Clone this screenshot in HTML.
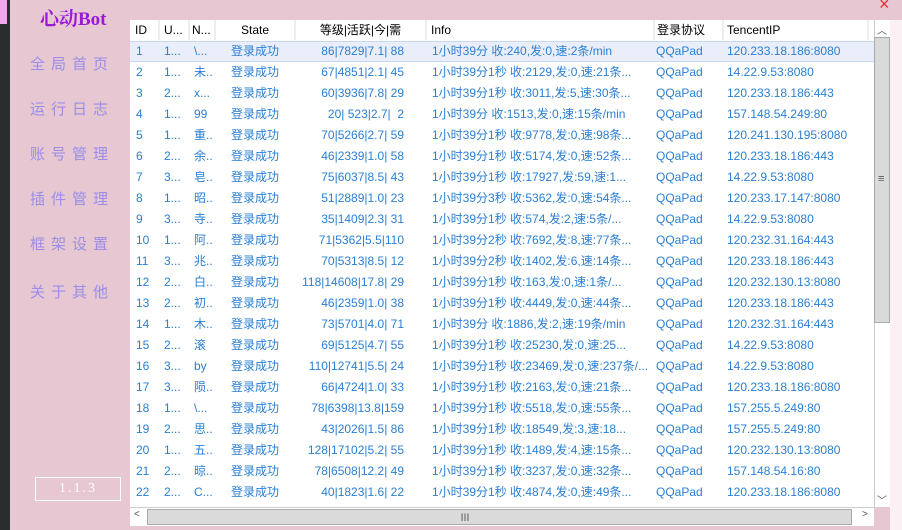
<!DOCTYPE html><html><head><meta charset="utf-8"><style>
body{margin:0;width:902px;height:530px;background:#e6c7d2;position:relative;overflow:hidden;font-family:"Liberation Sans","Noto Sans CJK SC",sans-serif}
.strip{position:absolute;left:0;top:0;width:10px;height:530px;background:#2a2c30}
.strip i{position:absolute;left:0;top:0;width:7px;height:24px;background:#f0a8f0}
.title{position:absolute;left:40px;top:4px;font:bold 19px "Liberation Serif","Noto Serif CJK SC",serif;color:#9a1ad8}
.nav{position:absolute;left:30px;font-size:15px;color:#9a8ee8;letter-spacing:6px;font-family:"Noto Sans CJK SC",sans-serif}
.ver{position:absolute;left:35px;top:477px;width:84px;height:22px;border:1px solid #fff;color:#fff;font:14px "Liberation Serif",serif;text-align:center;line-height:22px;letter-spacing:2px}
.x{position:absolute;left:879px;top:-6px;color:#e03030;font-size:18px}
.rt{position:absolute;left:890px;top:20px;width:12px;height:510px;background:#fbf0f4}
.tbl{position:absolute;left:130px;top:20px;width:744px;height:487px;background:#fff;overflow:hidden}
.row{position:absolute;left:0;height:21px;width:744px;font-size:12px;line-height:21px;color:#2a7fd4;font-family:"Liberation Sans","Noto Sans CJK SC",sans-serif}
.row span{position:absolute;top:0;white-space:nowrap;overflow:hidden}
.hd{color:#000;background:#fff}
.hd span{border-right:2px solid #eee;height:20px}
.sel{background:#e9eefa;border-top:1px solid #c8d8f0;border-bottom:1px solid #c8d8f0;height:19px;line-height:19px}
.vs{position:absolute;left:874px;top:20px;width:15px;height:487px;background:#fff;border-left:1px solid #ccc}
.th{position:absolute;left:874px;top:37px;width:14px;height:284px;background:#dadada;border:1px solid #aaa;border-width:1px 1px 1px 1px}
.hs{position:absolute;left:130px;top:507px;width:744px;height:18px;background:#fff;border-top:1px solid #ccc}
.hth{position:absolute;left:147px;top:509px;width:703px;height:14px;background:#dadada;border:1px solid #aaa}
.ar{position:absolute;font-size:10px;color:#555}
</style></head><body>
<div class="strip"><i></i></div>
<div class="title">心动Bot</div>
<div class="nav" style="top:53px">全局首页</div>
<div class="nav" style="top:98px">运行日志</div>
<div class="nav" style="top:143px">账号管理</div>
<div class="nav" style="top:188px">插件管理</div>
<div class="nav" style="top:233px">框架设置</div>
<div class="nav" style="top:281px">关于其他</div>
<div class="ver">1.1.3</div>
<div class="x">×</div>
<div class="rt"></div>
<div class="tbl" id="t">
<div class="row hd" style="top:0"><span style="left:5px;width:23px">ID</span><span style="left:34px;width:24px">U...</span><span style="left:62px;width:22px">N...</span><span style="left:86px;width:78px;text-align:center">State</span><span style="left:166px;width:129px;text-align:center">等级|活跃|今|需</span><span style="left:301px;width:222px">Info</span><span style="left:527px;width:65px">登录协议</span><span style="left:597px;width:140px">TencentIP</span></div>
</div>
<div class="vs"></div><div class="th"></div>
<div class="ar" style="left:877px;top:22px">︿</div>
<div class="ar" style="left:878px;top:173px;font-size:11px">≡</div>
<div class="ar" style="left:877px;top:492px">﹀</div>
<div class="hs"></div><div class="hth"></div>
<div class="ar" style="left:134px;top:509px">&lt;</div>
<div class="ar" style="left:460px;top:509px">Ⅲ</div>
<div class="ar" style="left:862px;top:509px">&gt;</div>
<script>
var d=[["1","1...","\\...","86|7829|7.1| 88","1小时39分 收:240,发:0,速:2条/min","120.233.18.186:8080"],
["2","1...","未..","67|4851|2.1| 45","1小时39分1秒 收:2129,发:0,速:21条...","14.22.9.53:8080"],
["3","2...","x...","60|3936|7.8| 29","1小时39分1秒 收:3011,发:5,速:30条...","120.233.18.186:443"],
["4","1...","99","20| 523|2.7|  2","1小时39分 收:1513,发:0,速:15条/min","157.148.54.249:80"],
["5","1...","重..","70|5266|2.7| 59","1小时39分1秒 收:9778,发:0,速:98条...","120.241.130.195:8080"],
["6","2...","余..","46|2339|1.0| 58","1小时39分1秒 收:5174,发:0,速:52条...","120.233.18.186:443"],
["7","3...","皂..","75|6037|8.5| 43","1小时39分1秒 收:17927,发:59,速:1...","14.22.9.53:8080"],
["8","1...","昭..","51|2889|1.0| 23","1小时39分3秒 收:5362,发:0,速:54条...","120.233.17.147:8080"],
["9","3...","寺..","35|1409|2.3| 31","1小时39分1秒 收:574,发:2,速:5条/...","14.22.9.53:8080"],
["10","1...","阿..","71|5362|5.5|110","1小时39分2秒 收:7692,发:8,速:77条...","120.232.31.164:443"],
["11","3...","兆..","70|5313|8.5| 12","1小时39分2秒 收:1402,发:6,速:14条...","120.233.18.186:443"],
["12","2...","白..","118|14608|17.8| 29","1小时39分1秒 收:163,发:0,速:1条/...","120.232.130.13:8080"],
["13","2...","初..","46|2359|1.0| 38","1小时39分1秒 收:4449,发:0,速:44条...","120.233.18.186:443"],
["14","1...","木..","73|5701|4.0| 71","1小时39分 收:1886,发:2,速:19条/min","120.232.31.164:443"],
["15","2...","滚","69|5125|4.7| 55","1小时39分1秒 收:25230,发:0,速:25...","14.22.9.53:8080"],
["16","3...","by","110|12741|5.5| 24","1小时39分1秒 收:23469,发:0,速:237条/...","14.22.9.53:8080"],
["17","3...","陨..","66|4724|1.0| 33","1小时39分1秒 收:2163,发:0,速:21条...","120.233.18.186:8080"],
["18","1...","\\...","78|6398|13.8|159","1小时39分1秒 收:5518,发:0,速:55条...","157.255.5.249:80"],
["19","2...","思..","43|2026|1.5| 86","1小时39分1秒 收:18549,发:3,速:18...","157.255.5.249:80"],
["20","1...","五..","128|17102|5.2| 55","1小时39分1秒 收:1489,发:4,速:15条...","120.232.130.13:8080"],
["21","2...","晾..","78|6508|12.2| 49","1小时39分1秒 收:3237,发:0,速:32条...","157.148.54.16:80"],
["22","2...","C...","40|1823|1.6| 22","1小时39分1秒 收:4874,发:0,速:49条...","120.233.18.186:8080"]];
var t=document.getElementById('t'),h='';
d.forEach(function(r,i){h+='<div class="row'+(i==0?' sel':'')+'" style="top:'+(21+i*21)+'px"><span style="left:6px">'+r[0]+'</span><span style="left:34px;width:24px">'+r[1]+'</span><span style="left:64px;width:22px">'+r[2]+'</span><span style="left:86px;width:78px;text-align:center">登录成功</span><span style="left:166px;width:136px;text-align:right;width:108px">'+r[3].replace(/ /g,'&nbsp;')+'</span><span style="left:302px;width:222px">'+r[4]+'</span><span style="left:526px">QQaPad</span><span style="left:597px">'+r[5]+'</span></div>';});
t.insertAdjacentHTML('beforeend',h);
</script>
</body></html>
